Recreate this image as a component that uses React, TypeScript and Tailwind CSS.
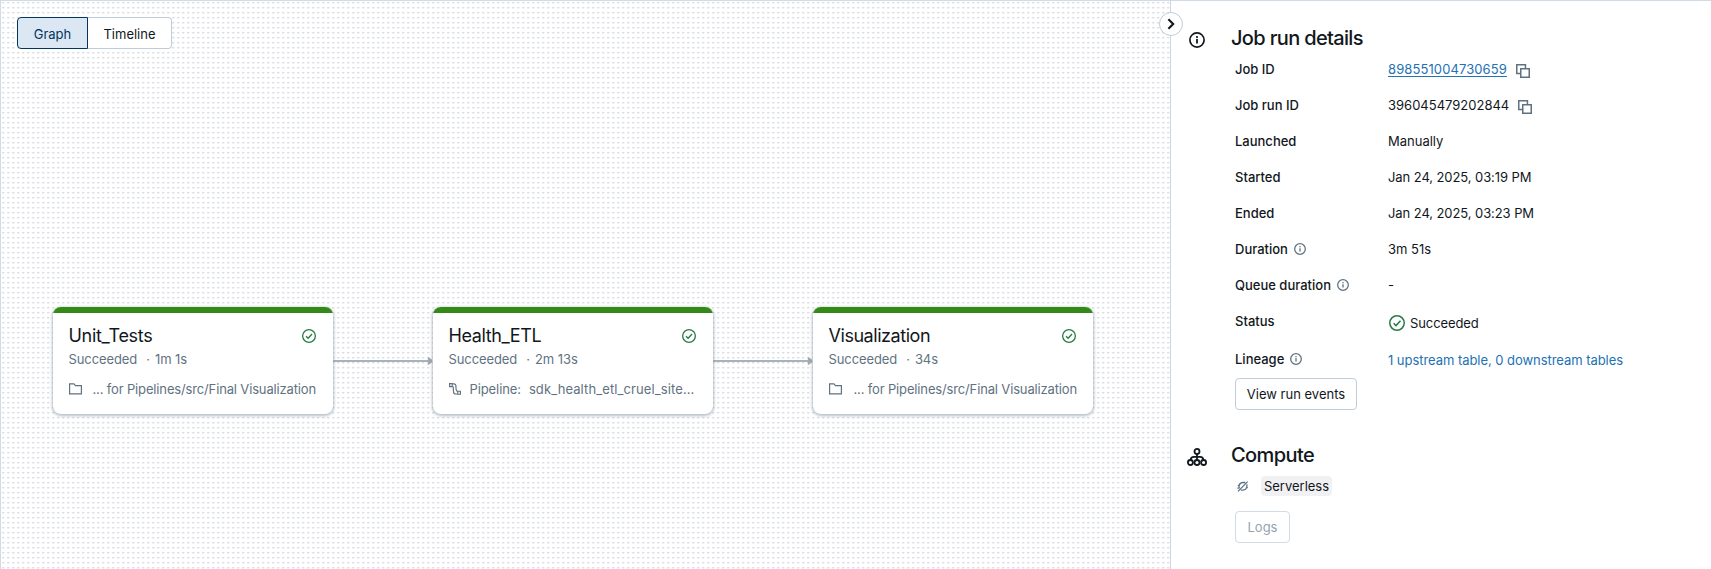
import React from "react";

const INK = "#11171c";

function CheckCircle({ size, className = "" }: { size: number; className?: string }) {
  return (
    <svg width={size} height={size} viewBox="0 0 16 16" fill="none" className={`shrink-0 ${className}`}>
      <circle cx="8" cy="8" r="7.25" stroke="#277c43" strokeWidth="1.5" />
      <path d="M4.6 8.3 7 10.6l4.5-4.9" stroke="#277c43" strokeWidth="1.5" />
    </svg>
  );
}

function Info({ size, color, className = "" }: { size: number; color: string; className?: string }) {
  return (
    <svg width={size} height={size} viewBox="0 0 16 16" fill="none" className={`shrink-0 ${className}`}>
      <circle cx="8" cy="8" r="7.1" stroke={color} strokeWidth="1.7" />
      <path d="M8 7v4.4" stroke={color} strokeWidth="1.8" />
      <circle cx="8" cy="5.1" r="1.05" fill={color} />
    </svg>
  );
}

function Copy() {
  return (
    <svg width="14" height="14" viewBox="0 0 14 14" fill="none" className="shrink-0">
      <path d="M4.5 9.4H.75V.75h8.7v3.6" stroke="#5f7281" strokeWidth="1.5" />
      <path d="M4.75 4.75h8.5v8.5h-8.5z" stroke="#5f7281" strokeWidth="1.5" />
    </svg>
  );
}

function Folder() {
  return (
    <svg width="13" height="12" viewBox="0 0 13 12" fill="none" className="shrink-0">
      <path d="M.6.9h4.3l1.6 1.7h5.9v8.2H.6z" stroke="#5f7281" strokeWidth="1.2" />
    </svg>
  );
}

function Pipeline() {
  return (
    <svg width="12" height="12" viewBox="0 0 12 12" fill="none" className="shrink-0">
      <path d="M.6.6h2.6v3H.6zM8.8 8.2h2.6v3H8.8z" stroke="#5f7281" strokeWidth="1.15" />
      <path d="M3.2.8h1.6q2 0 2.1 2l.2 3.7q.1 1.9 1.7 1.9M3.2 3.4q1 0 1.1 1.2l.2 4q.1 2.4 2.3 2.4h2" stroke="#5f7281" strokeWidth="1.15" />
    </svg>
  );
}

function ComputeIcon() {
  return (
    <svg width="20" height="18" viewBox="0 0 20 18" fill="none" stroke={INK} strokeWidth="1.8" className="shrink-0">
      <circle cx="10" cy="3.4" r="2.5" />
      <circle cx="3.4" cy="14.5" r="2.5" />
      <circle cx="10" cy="14.5" r="2.5" />
      <circle cx="16.6" cy="14.5" r="2.5" />
      <path d="M10 5.9v6.1M3.6 12q.2-3.1 3.4-3.1h6q3.2 0 3.4 3.1" />
    </svg>
  );
}

function ServerlessIcon() {
  return (
    <svg width="12" height="11" viewBox="0 0 12 11" fill="none" stroke="#5f7281" strokeWidth="1.3" className="shrink-0">
      <path d="M1 10.4 10.6.6M8.2 1.5H6Q2.2 1.9 2 5.4q0 1.2.5 2M9.7 3.4q.3.6.2 1.8-.4 3.6-4.1 4H3.8M.8 4.4h2M.4 7.2h2M9 6.6h1.8" />
    </svg>
  );
}

type Task = { name: string; nameClass: string; time: string; pathClass?: string; pipeline?: boolean };

const tasks: Task[] = [
  { name: "Unit_Tests", nameClass: "tracking-[-0.3px]", time: "1m 1s", pathClass: "ml-[11px]" },
  { name: "Health_ETL", nameClass: "tracking-[-0.4px]", time: "2m 13s", pipeline: true },
  { name: "Visualization", nameClass: "tracking-[-0.45px]", time: "34s", pathClass: "ml-[12px]" },
];

function TaskCard({ task }: { task: Task }) {
  return (
    <div className="h-[107px] w-[280px] shrink-0 overflow-hidden rounded-[8px] bg-white shadow-[0_1px_3px_1px_rgba(75,100,125,0.4)]">
      <div className="h-[6px] bg-[#338a17]" />
      <div className="px-4 text-[#5f7281]">
        <div className="flex h-[24px] items-center justify-between pt-[22px]">
          <span className={`text-[18px] leading-6 text-[#11171c] ${task.nameClass}`}>{task.name}</span>
          <CheckCircle size={14} className="mr-px" />
        </div>
        <div className="mt-3 flex h-5 items-center leading-5">
          <span className="tracking-[-0.1px]">Succeeded</span>
          <span className="ml-[9px]">·</span>
          <span className="ml-[5px] tracking-[-0.05px]">{task.time}</span>
        </div>
        <div className="mt-[10px] flex h-5 items-center leading-5 whitespace-nowrap">
          {task.pipeline ? (
            <>
              <Pipeline />
              <span className="ml-[9px] tracking-[-0.1px]">Pipeline:</span>
              <span className="ml-[8px] tracking-[0.1px]">sdk_health_etl_cruel_site...</span>
            </>
          ) : (
            <>
              <Folder />
              <span className={`tracking-[-0.15px] ${task.pathClass}`}>... for Pipelines/src/Final Visualization</span>
            </>
          )}
        </div>
      </div>
    </div>
  );
}

function Arrow() {
  return (
    <svg width="100" height="10" viewBox="0 0 100 10" className="shrink-0">
      <path d="M0 5h96" stroke="#8b98a4" strokeWidth="1.4" />
      <path d="M94.8.8l4 2.8q1.2 1.4 0 2.8l-4 2.8z" fill="#a3a9af" />
    </svg>
  );
}

function Row({ label, info, children, className = "h-9" }: { label: string; info?: boolean; children: React.ReactNode; className?: string }) {
  return (
    <div className={`flex items-center ${className}`}>
      <div className="flex w-[153px] items-center font-medium">
        <span>{label}</span>
        {info && <Info size={12} color="#5f7281" className="mb-px ml-[6px]" />}
      </div>
      <div className="flex items-center">{children}</div>
    </div>
  );
}

export default function App() {
  return (
    <div className="flex h-[569px] w-[1711px] overflow-hidden border-t border-l border-[#d1dbe5] bg-white font-['Inter',sans-serif] text-[13px] leading-5 text-[#11171c]">
      <main className="relative flex w-[1170px] shrink-0 flex-col border-r border-[#c9d5e0] bg-[radial-gradient(ellipse_1.8px_1.3px_at_2.2px_1.7px,#dbe0e6_35%,transparent_100%)] bg-[length:5px_5px] pt-4 pl-4">
        <div className="flex h-8 w-[155px] shrink-0">
          <button className="w-[71px] rounded-l-[4px] border border-[#04355d] bg-[#dbe7f3] pt-px text-[#04355d]">Graph</button>
          <button className="flex-1 rounded-r-[4px] border border-l-0 border-[#c0cdd8] bg-white pt-px">Timeline</button>
        </div>
        <div className="mt-[258px] flex items-center pl-[35.5px]">
          <TaskCard task={tasks[0]} />
          <Arrow />
          <TaskCard task={tasks[1]} />
          <Arrow />
          <TaskCard task={tasks[2]} />
        </div>
        <button className="absolute top-[11px] right-[-12.5px] z-10 flex size-6 items-center justify-center rounded-full border border-[#c0cdd8] bg-white">
          <svg width="8" height="12" viewBox="0 0 8 12" fill="none">
            <path d="M1.4 1.2 6.2 6l-4.8 4.8" stroke={INK} strokeWidth="2.1" />
          </svg>
        </button>
      </main>
      <aside className="flex flex-1 flex-col pt-[23px] pl-[16px]">
        <section className="flex">
          <div className="w-[44px] pt-2 pl-[2px]">
            <Info size={16} color={INK} />
          </div>
          <div>
            <h2 className="text-[20px] leading-7 font-medium tracking-[-0.65px]">Job run details</h2>
            <div className="-mt-px pl-1">
              <Row label="Job ID">
                <a className="tracking-[0.1px] text-[#2272b4] underline underline-offset-[2px]">898551004730659</a>
                <span className="ml-[9px] pt-[3px]"><Copy /></span>
              </Row>
              <Row label="Job run ID">
                <span>396045479202844</span>
                <span className="ml-[9px] pt-[3px]"><Copy /></span>
              </Row>
              <Row label="Launched">Manually</Row>
              <Row label="Started"><span className="tracking-[-0.08px]">Jan 24, 2025, 03:19 PM</span></Row>
              <Row label="Ended"><span className="tracking-[-0.08px]">Jan 24, 2025, 03:23 PM</span></Row>
              <Row label="Duration" info>3m 51s</Row>
              <Row label="Queue duration" info>-</Row>
              <Row label="Status">
                <CheckCircle size={16} className="mt-[3px] ml-px" />
                <span className="ml-[5px] pt-[3px] tracking-[-0.1px]">Succeeded</span>
              </Row>
              <Row label="Lineage" info className="h-[39px] pt-px">
                <span className="pt-[2px] tracking-[-0.05px] text-[#2272b4]">1 upstream table, 0 downstream tables</span>
              </Row>
              <button className="block h-8 w-[122px] rounded-[4px] border border-[#c0cdd8]">View run events</button>
            </div>
          </div>
        </section>
        <section className="mt-[31px] flex">
          <div className="w-[44px] pt-[7px]">
            <ComputeIcon />
          </div>
          <div>
            <h2 className="text-[20px] leading-7 font-medium tracking-[-0.6px]">Compute</h2>
            <div className="flex items-center pt-[7px] pl-[6px]">
              <ServerlessIcon />
              <span className="ml-[12px] h-5 w-[71px] rounded-[4px] bg-[#f1f1f3] text-center">Serverless</span>
            </div>
            <button className="mt-[15px] ml-1 block h-8 w-[55px] rounded-[4px] border border-[#d1dbe5] text-[#92a4b3]">Logs</button>
          </div>
        </section>
      </aside>
    </div>
  );
}
